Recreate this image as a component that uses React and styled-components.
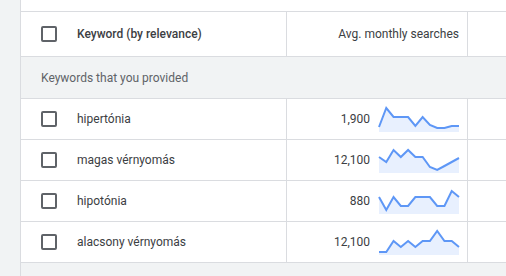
import React from 'react';
import styled, { createGlobalStyle } from 'styled-components';

const GlobalStyle = createGlobalStyle`
    html, body {
        margin: 0;
        padding: 0;
        background: #ffffff;
    }
    body {
        font-family: Roboto, "Liberation Sans", Arial, sans-serif;
        font-size: 12px;
        color: #3c4043;
    }
`

const Page = styled.div`
    display: flex;
    width: 506px;
    height: 276px;
    overflow: hidden;
    background: #f1f3f4;
`
const Rail = styled.div`
    width: 20px;
    flex: none;
    background: #f1f3f4;
    border-right: 1px solid #dadce0;
`
const Main = styled.div`
    flex: 1;
    display: flex;
    flex-direction: column;
    min-width: 0;
`
const TopGap = styled.div`
    height: 11px;
    background: #ffffff;
    border-bottom: 1px solid #dadce0;
`
const Row = styled.div`
    display: grid;
    grid-template-columns: 266px 181px 1fr;
    height: ${p => p.height}px;
    background: #ffffff;
    border-bottom: 1px solid #dadce0;
`
const Cell = styled.div`
    display: flex;
    align-items: center;
    gap: ${p => p.gap || 0}px;
    justify-content: ${p => p.right ? 'flex-end' : 'flex-start'};
    padding: ${p => p.right ? '0 8px 0 0' : '0 0 0 20px'};
    border-right: ${p => p.last ? 'none' : '1px solid #dadce0'};
`
const GroupRow = styled.div`
    display: flex;
    align-items: center;
    height: 41px;
    padding-left: 20px;
    background: #f1f3f4;
    border-bottom: 1px solid #dadce0;
    color: #5f6368;
`
const Checkbox = styled.span`
    box-sizing: border-box;
    width: 16px;
    height: 16px;
    flex: none;
    border: 2px solid #5f6368;
    border-radius: 2px;
`
const Label = styled.span`
    font-weight: ${p => p.strong ? 500 : 400};
    color: #3c4043;
    white-space: nowrap;
`
const Number = styled.span`
    color: #3c4043;
`

const rows = [
    { keyword: 'hipertónia', searches: '1,900', trend: [21, 2, 11, 11, 11, 20, 11, 19, 22, 22, 20, 20] },
    { keyword: 'magas vérnyomás', searches: '12,100', trend: [10, 15, 3, 10, 3, 10, 10, 20, 23, 19, 15, 11] },
    { keyword: 'hipotónia', searches: '880', trend: [9, 22, 9, 18, 18, 9, 9, 9, 18, 18, 3, 9] },
    { keyword: 'alacsony vérnyomás', searches: '12,100', trend: [23, 23, 12, 18, 12, 18, 12, 12, 2, 12, 12, 18] },
]

function Sparkline({ values }) {
    const step = 80 / (values.length - 1);
    const pts = values.map((v, i) => `${(i * step).toFixed(2)},${v}`).join(' ');
    return (
        <svg width="80" height="26" viewBox="0 0 80 26" style={{ overflow: 'visible' }}>
            <polygon points={`0,26 ${pts} 80,26`} fill="#e8f0fe" />
            <polyline points={pts} fill="none" stroke="#5e97f6" strokeWidth="2" strokeLinejoin="miter" />
        </svg>
    )
}

export default function App() {
    return (
        <Page>
            <GlobalStyle />
            <Rail />
            <Main>
                <TopGap />
                <Row height={44}>
                    <Cell gap={20}>
                        <Checkbox />
                        <Label strong>Keyword (by relevance)</Label>
                    </Cell>
                    <Cell right>
                        <Label>Avg. monthly searches</Label>
                    </Cell>
                    <Cell last />
                </Row>
                <GroupRow>Keywords that you provided</GroupRow>
                {rows.map(r => (
                    <Row height={40} key={r.keyword}>
                        <Cell gap={20}>
                            <Checkbox />
                            <Label>{r.keyword}</Label>
                        </Cell>
                        <Cell right gap={9}>
                            <Number>{r.searches}</Number>
                            <Sparkline values={r.trend} />
                        </Cell>
                        <Cell last />
                    </Row>
                ))}
            </Main>
        </Page>
    )
}
